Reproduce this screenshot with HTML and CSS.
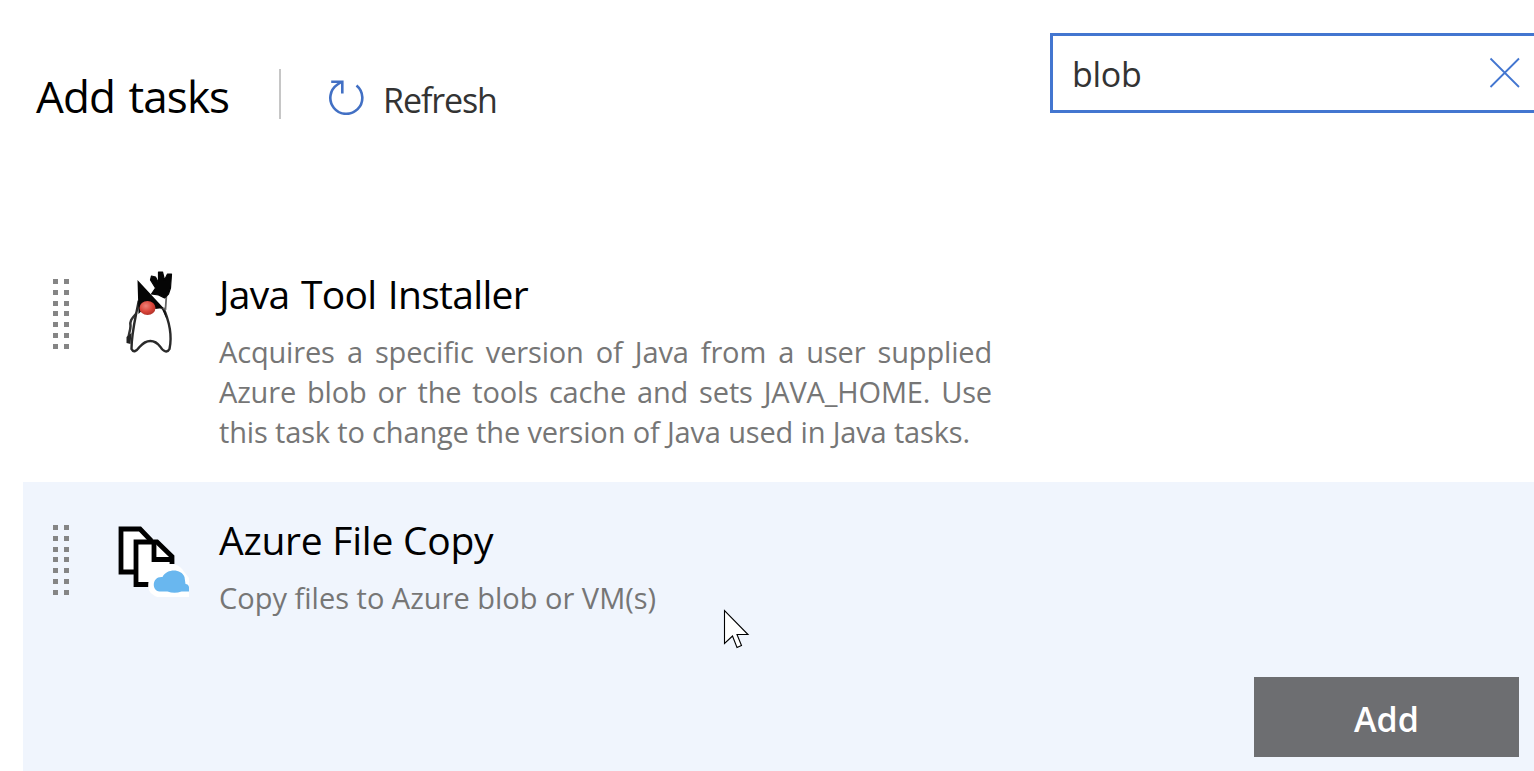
FILE: index.html
```html
<!DOCTYPE html>
<html lang="en">
<head>
<meta charset="utf-8">
<title>Add tasks</title>
<link rel="stylesheet" href="styles.css">
</head>
<body>
<main class="panel">
  <header class="toolbar">
    <h1 class="heading"><span>Add tasks</span></h1>
    <div class="divider"></div>
    <button class="refresh">
      <svg class="refresh-icon" width="38" height="38" viewBox="0 0 38 38"><path d="M29.500 8.500A16 16 0 1 1 10.500 7.500L15 4.500M4.200 4.800H15.300V16.500" fill="none" stroke="#4270c4" stroke-width="2.600"/></svg>
      <span class="refresh-label">Refresh</span>
    </button>
    <div class="search">
      <span class="search-text">blob</span>
      <svg width="32" height="32" viewBox="0 0 32 32"><path d="M1.500 1.500L30 30M30 1.500L1.500 30" fill="none" stroke="#4376d0" stroke-width="1.800"/></svg>
    </div>
  </header>
  <section class="tasks">
    <article class="task">
      <div class="grip"><i></i><i></i><i></i><i></i><i></i><i></i><i></i><i></i><i></i><i></i><i></i><i></i><i></i><i></i></div>
      <svg class="task-icon" width="80" height="90" viewBox="-2.500 2 80 90">
        <defs><radialGradient id="nose" cx=".4" cy=".35" r=".7"><stop offset="0" stop-color="#ee8177"/><stop offset=".6" stop-color="#d94338"/><stop offset="1" stop-color="#ad3028"/></radialGradient></defs>
        <path d="M25 48C20 54 17 56 18 62C18 68 15 71 16 77" fill="none" stroke="#333" stroke-width="2.500"/>
        <path d="M14 73L19 69L18 80L14 79Z" fill="#222"/>
        <path d="M26 38C23 54 19 69 19 85C21 89 24 87 27 83C34 75 42 75 48 83C51 88 55 89 57 85C60 71 56 55 50 42Z" fill="#fff" stroke="#2a2a2a" stroke-width="2.400"/>
        <path d="M41 29L54 30L53 45L48 44" fill="#fff" stroke="#666" stroke-width="1.800"/>
        <path d="M48 42L53 48L54 55Z" fill="#111"/>
        <path d="M25 16L51 44L43 45L38 38L26 50Z" fill="#050505"/>
        <path d="M39 30L43 24L38 16L39 12L43 13L46 19L46 8L50 8L52 16L55 10L59 10L58 24L56 30L52 34L46 31Z" fill="#050505" stroke="#050505" stroke-width="1.200" stroke-linejoin="round"/>
        <ellipse cx="35" cy="44" rx="8" ry="7" fill="url(#nose)"/>
      </svg>
      <div class="task-body">
        <h2 class="task-title"><span class="title-java">Java Tool Installer</span></h2>
        <p class="task-text text-java">Acquires a specific version of Java from a user supplied Azure blob or the tools cache and sets JAVA_HOME. Use this task to change the version of Java used in Java tasks.</p>
      </div>
    </article>
    <article class="task task-active">
      <div class="grip"><i></i><i></i><i></i><i></i><i></i><i></i><i></i><i></i><i></i><i></i><i></i><i></i><i></i><i></i></div>
      <svg class="task-icon" width="80" height="90" viewBox="0.500 0 80 90">
        <path d="M11.500 17H31L46 32V60H11.500Z" fill="#fff"/>
        <path d="M26 60H11.500V17H30.500L42 29" fill="none" stroke="#000" stroke-width="4.800"/>
        <path d="M26.500 30H48L62.500 44V72.500H26.500Z" fill="#fff"/>
        <path d="M39 72.500H26.500V30H47.500L62.500 44.500V52" fill="none" stroke="#000" stroke-width="4.800"/>
        <path d="M44.500 30V47.500H62" fill="none" stroke="#000" stroke-width="4.800"/>
        <path d="M39 72C40 66 44 62 48 61C53 50 68 49 74 59L79.500 66V85H48C42 83 38 79 39 72Z" fill="#fff"/>
        <path d="M50 79.500C42 79 42 64 53 65C58 56 72 57 75 65L76 72C78 72 79 73 79.500 75V79.500H72Q65 82 58 79.500Z" fill="#69b7ef"/>
      </svg>
      <div class="task-body">
        <h2 class="task-title"><span class="title-azure">Azure File Copy</span></h2>
        <p class="task-text">Copy files to Azure blob or VM(s)</p>
      </div>
      <button class="add">Add</button>
    </article>
  </section>
  <svg class="cursor" width="28" height="42" viewBox="0 0 28 42"><path d="M1.500 1.500V34.500L9.500 27L14 38.500L18.500 36.500L14 25.500H25Z" fill="#fff" stroke="#000" stroke-width="1.100"/></svg>
</main>
</body>
</html>
```
FILE: styles.css
```css
* { box-sizing: border-box; }
body {
  margin: 0;
  background: #fff;
  overflow: hidden;
  font-family: "Open Sans", "Noto Sans", sans-serif;
}
h1, h2, p { margin: 0; font-weight: 400; }
button { border: 0; padding: 0; background: none; font-family: inherit; }
.panel { position: relative; width: 1534px; height: 771px; overflow: hidden; }
.toolbar { display: flex; align-items: flex-start; height: 236px; padding: 33px 0 0 36px; }
.heading { flex: none; width: 243px; padding-top: 33px; font-size: 44px; line-height: 60px; letter-spacing: -0.9px; word-spacing: 3px; color: #000; white-space: nowrap; }
.divider { flex: none; width: 2px; height: 50px; margin-top: 36px; background: #c6c6c6; }
.refresh { display: flex; flex: none; width: 769px; padding: 44px 0 0 46px; color: #333; }
.refresh-icon { flex: none; }
.refresh-label { margin-left: 18px; font-size: 34px; line-height: 46px; letter-spacing: -1.1px; }
.search { display: flex; align-items: center; justify-content: space-between; flex: none; width: 488px; height: 80px; padding: 0 14px 0 19px; border: 3px solid #4376d0; color: #333; }
.search-text { padding-top: 2px; font-size: 34px; line-height: 46px; letter-spacing: -0.3px; }
.task { display: flex; align-items: flex-start; height: 246px; margin-left: 23px; padding-left: 30px; }
.task-active { height: 289px; background: #f0f5fd; }
.grip { display: grid; grid-template-columns: 5px 5px; grid-auto-rows: 5px; gap: 5.75px 6px; width: 57px; padding-top: 43px; }
.grip i { background: #858585; }
.task-icon { flex: none; margin-top: 30px; }
.task-body { width: 773px; margin-left: 29px; padding-top: 31px; }
.task-title { font-size: 39px; line-height: 54px; color: #000; }
.title-java { letter-spacing: -0.7px; word-spacing: 2px; }
.title-azure { letter-spacing: -0.25px; }
.task-text { padding-top: 11px; font-size: 29px; line-height: 40px; color: #767676; text-align: justify; }
.text-java { letter-spacing: -0.16px; }
.add { align-self: flex-end; width: 265px; height: 80px; margin: 0 15px 14px auto; padding-top: 4px; background: #6d6e71; color: #fff; font-size: 34px; font-weight: 600; line-height: 46px; }
.cursor { position: absolute; left: 723px; top: 609px; }
```
